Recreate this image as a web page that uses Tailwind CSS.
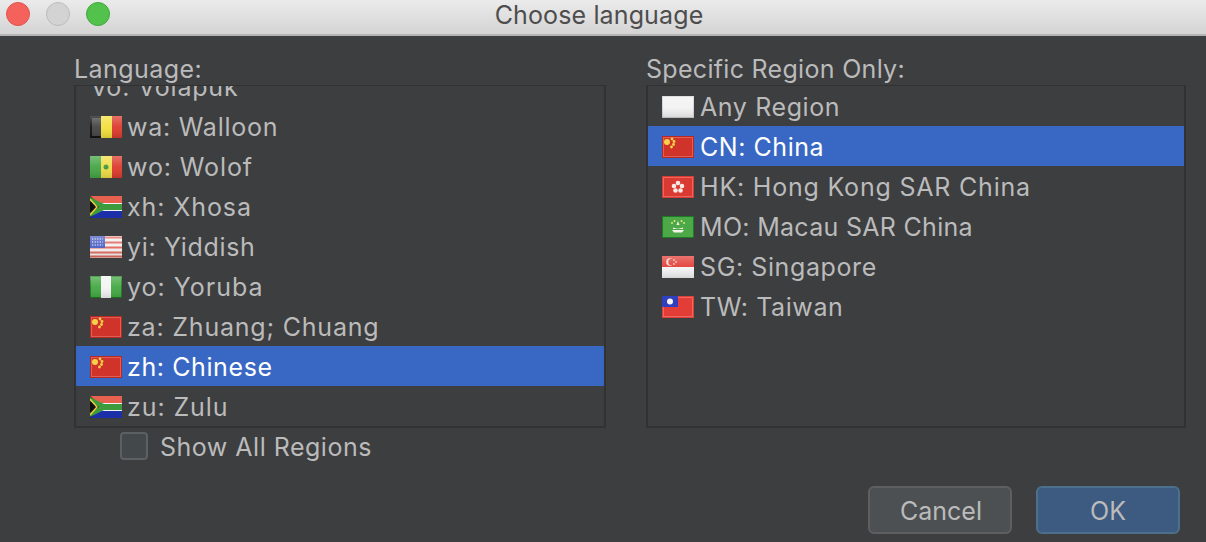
<!DOCTYPE html>
<html lang="en">
<head>
<meta charset="UTF-8">
<title>Choose language</title>
<script src="https://cdn.jsdelivr.net/npm/@tailwindcss/browser@4"></script>
</head>
<body class="bg-[#3d3e40] overflow-hidden">
<!-- shared flags -->
<svg width="0" height="0" class="absolute">
  <defs>
    <linearGradient id="gloss" x1="0" y1="0" x2="0" y2="1">
      <stop offset="0" stop-color="#fff" stop-opacity=".28"/>
      <stop offset=".5" stop-color="#fff" stop-opacity=".05"/>
      <stop offset="1" stop-color="#000" stop-opacity=".12"/>
    </linearGradient>
    <symbol id="cn" viewBox="0 0 32 22">
      <rect width="32" height="22" fill="#b92820"/>
      <rect x="1.500" y="1.500" width="29" height="19" fill="#d0332a" stroke="#dc6057" stroke-width="1"/>
      <circle cx="5" cy="6" r="3" fill="#f5d24a"/>
      <circle cx="10" cy="3" r="1.400" fill="#f5d24a"/>
      <circle cx="12" cy="5.500" r="1.400" fill="#f5d24a"/>
      <circle cx="11.500" cy="8.500" r="1.400" fill="#f5d24a"/>
      <circle cx="9.500" cy="11" r="1.400" fill="#f5d24a"/>
    </symbol>
    <symbol id="za" viewBox="0 0 32 22">
      <rect width="32" height="7" fill="#e8604e"/>
      <rect y="7" width="32" height="8" fill="#f2f2f2"/>
      <rect y="15" width="32" height="7" fill="#1c2fa8"/>
      <path d="M0 0 L13 11 L0 22 Z" fill="#111"/>
      <path d="M0 1 L14 8 H32 V14 H14 L0 21 V17 L9 11 L0 5 Z" fill="#3d9a3d"/>
      <path d="M0 3 L7 11 L0 19" fill="none" stroke="#e9c93f" stroke-width="1.600"/>
    </symbol>
  </defs>
</svg>

<div class="w-[1206px] h-[542px] flex flex-col font-['Inter',sans-serif]">
  <!-- title bar -->
  <div class="h-[36px] shrink-0 flex items-center relative bg-gradient-to-b from-[#ebebeb] to-[#d4d4d4] border-b-2 border-[#b4b4b4]">
    <div class="flex gap-[16px] pl-[6px] -mt-[6px]">
      <span class="w-[24px] h-[24px] rounded-full bg-[#f4625b] border border-[#e0554e]"></span>
      <span class="w-[24px] h-[24px] rounded-full bg-[#d3d3d3] border border-[#bcbcbc]"></span>
      <span class="w-[24px] h-[24px] rounded-full bg-[#53c24d] border border-[#3fa93a]"></span>
    </div>
    <div class="absolute left-0 top-0 w-[1198px] text-center text-[25px] leading-[30px] tracking-[0.13px] text-[#4d4d4d]">Choose language</div>
  </div>

  <div class="flex-1 flex flex-col text-[#bbbbbb] text-[25px]">
    <div class="flex gap-[40px] pl-[74px] pt-[18px]">
      <!-- language column -->
      <div class="w-[532px]">
        <div class="h-[31px] leading-[30px] tracking-[0.45px] relative z-10">Language:</div>
        <div class="h-[343px] border-2 border-t-1 border-[#323232] overflow-hidden">
          <div class="-mt-[20px]">
            <div class="h-[40px] flex items-center pl-[16px]"><span class="pt-[4px] tracking-[0.8px]">vo: Volapuk</span></div>
            <div class="h-[40px] flex items-center pl-[14px] gap-[5px]">
              <svg class="w-[32px] h-[22px] mt-[2px] blur-[0.5px]" viewBox="0 0 32 22"><rect width="11" height="22" fill="#111"/><rect x="2" y="2" width="9" height="18" fill="#444"/><rect x="11" width="11" height="22" fill="#f3e03c"/><rect x="22" width="10" height="22" fill="#dc3a2c"/><rect width="32" height="22" fill="url(#gloss)"/></svg>
              <span class="pt-[4px] tracking-[0.75px]">wa: Walloon</span>
            </div>
            <div class="h-[40px] flex items-center pl-[14px] gap-[5px]">
              <svg class="w-[32px] h-[22px] mt-[2px] blur-[0.5px]" viewBox="0 0 32 22"><rect width="11" height="22" fill="#44a544"/><rect x="11" width="11" height="22" fill="#f0dd46"/><rect x="22" width="10" height="22" fill="#dc3a2c"/><circle cx="16" cy="11" r="2.500" fill="#3d9a3d"/><rect width="32" height="22" fill="url(#gloss)"/></svg>
              <span class="pt-[4px] tracking-[0.9px]">wo: Wolof</span>
            </div>
            <div class="h-[40px] flex items-center pl-[14px] gap-[5px]">
              <svg class="w-[32px] h-[22px] mt-[2px] blur-[0.5px]"><use href="#za"/></svg>
              <span class="pt-[4px] tracking-[0.9px]">xh: Xhosa</span>
            </div>
            <div class="h-[40px] flex items-center pl-[14px] gap-[5px]">
              <svg class="w-[32px] h-[22px] mt-[2px] blur-[0.5px]" viewBox="0 0 32 22"><rect width="32" height="22" fill="#f4eeee"/><path d="M0 1.500H32M0 6.500H32M0 11.500H32M0 16.500H32M0 20.500H32" stroke="#e0685c" stroke-width="2"/><rect width="15" height="12" fill="#4a5fc4"/><path d="M2 3h11M2 6h11M2 9h11" stroke="#fff" stroke-width="1.200" stroke-dasharray="1.200 1.400"/><rect width="32" height="22" fill="url(#gloss)"/></svg>
              <span class="pt-[4px] tracking-[0.65px]">yi: Yiddish</span>
            </div>
            <div class="h-[40px] flex items-center pl-[14px] gap-[5px]">
              <svg class="w-[32px] h-[22px] mt-[2px] blur-[0.5px]" viewBox="0 0 32 22"><rect width="32" height="22" fill="#1e7a1e"/><rect x="1" y="1" width="10" height="20" fill="#43a843"/><rect x="21" y="1" width="10" height="20" fill="#43a843"/><rect x="11" width="10" height="22" fill="#f4f4f4"/><rect width="32" height="22" fill="url(#gloss)"/></svg>
              <span class="pt-[4px] tracking-[1px]">yo: Yoruba</span>
            </div>
            <div class="h-[40px] flex items-center pl-[14px] gap-[5px]">
              <svg class="w-[32px] h-[22px] mt-[2px] blur-[0.5px]"><use href="#cn"/></svg>
              <span class="pt-[4px] tracking-[0.8px]">za: Zhuang; Chuang</span>
            </div>
            <div class="h-[40px] flex items-center pl-[14px] gap-[5px] bg-[#3968c4] text-white">
              <svg class="w-[32px] h-[22px] mt-[2px] blur-[0.5px]"><use href="#cn"/></svg>
              <span class="pt-[4px] tracking-[0.6px]">zh: Chinese</span>
            </div>
            <div class="h-[40px] flex items-center pl-[14px] gap-[5px]">
              <svg class="w-[32px] h-[22px] mt-[2px] blur-[0.5px]"><use href="#za"/></svg>
              <span class="pt-[4px] tracking-[0.9px]">zu: Zulu</span>
            </div>
          </div>
        </div>
      </div>

      <!-- region column -->
      <div class="w-[540px]">
        <div class="h-[31px] leading-[30px] tracking-[0.3px]">Specific Region Only:</div>
        <div class="h-[343px] border-2 border-t-1 border-[#323232] overflow-hidden">
          <div class="h-[40px] flex items-center pl-[14px] gap-[6px]">
            <svg class="w-[32px] h-[22px] mt-[2px] blur-[0.5px]" viewBox="0 0 32 22"><rect width="32" height="22" fill="#d2d2d2"/><rect x="1" y="1" width="30" height="20" fill="#f2f2f2"/><rect width="32" height="22" fill="url(#gloss)"/></svg>
            <span class="pt-[4px] tracking-[0.6px]">Any Region</span>
          </div>
          <div class="h-[40px] flex items-center pl-[14px] gap-[6px] bg-[#3968c4] text-white">
            <svg class="w-[32px] h-[22px] mt-[2px] blur-[0.5px]"><use href="#cn"/></svg>
            <span class="pt-[4px] tracking-[0.55px]">CN: China</span>
          </div>
          <div class="h-[40px] flex items-center pl-[14px] gap-[6px]">
            <svg class="w-[32px] h-[22px] mt-[2px] blur-[0.5px]" viewBox="0 0 32 22"><rect width="32" height="22" fill="#d93a32"/><rect x="1.500" y="1.500" width="29" height="19" fill="none" stroke="#e8685f"/><g fill="#fbe9e6"><circle cx="16" cy="7" r="2.300"/><circle cx="20" cy="10" r="2.300"/><circle cx="18.500" cy="14.500" r="2.300"/><circle cx="13.500" cy="14.500" r="2.300"/><circle cx="12" cy="10" r="2.300"/></g></svg>
            <span class="pt-[4px] tracking-[0.8px]">HK: Hong Kong SAR China</span>
          </div>
          <div class="h-[40px] flex items-center pl-[14px] gap-[6px]">
            <svg class="w-[32px] h-[22px] mt-[2px] blur-[0.5px]" viewBox="0 0 32 22"><rect width="32" height="22" fill="#1f7a25"/><rect x="1" y="1" width="30" height="20" fill="#4da848"/><path d="M16 5l1.500 4h-3zM10 14h12l-2 2.500h-8z" fill="#f2f2e6"/><path d="M11 11.500c3 1.500 7 1.500 10 0v1.500h-10z" fill="#f2f2e6"/><g fill="#f0e98a"><circle cx="10" cy="7" r=".9"/><circle cx="12.500" cy="5" r=".9"/><circle cx="19.500" cy="5" r=".9"/><circle cx="22" cy="7" r=".9"/></g></svg>
            <span class="pt-[4px] tracking-[0.3px]">MO: Macau SAR China</span>
          </div>
          <div class="h-[40px] flex items-center pl-[14px] gap-[6px]">
            <svg class="w-[32px] h-[22px] mt-[2px] blur-[0.5px]" viewBox="0 0 32 22"><rect width="32" height="11" fill="#e23d36"/><rect y="11" width="32" height="11" fill="#f4f4f4"/><circle cx="8" cy="6" r="3.800" fill="#f8dcd8"/><circle cx="9.500" cy="6" r="3.200" fill="#e23d36"/><circle cx="12" cy="4" r=".8" fill="#fff"/><circle cx="14" cy="6" r=".8" fill="#fff"/><circle cx="12" cy="8" r=".8" fill="#fff"/><rect width="32" height="22" fill="url(#gloss)"/></svg>
            <span class="pt-[4px] tracking-[0.6px]">SG: Singapore</span>
          </div>
          <div class="h-[40px] flex items-center pl-[14px] gap-[6px]">
            <svg class="w-[32px] h-[22px] mt-[2px] blur-[0.5px]" viewBox="0 0 32 22"><rect width="32" height="22" fill="#e23d36"/><rect x="1.500" y="1.500" width="29" height="19" fill="none" stroke="#ea6a62"/><rect width="16" height="11" fill="#2f3fc0"/><circle cx="8" cy="5.500" r="3" fill="#f4f4f4"/></svg>
            <span class="pt-[4px] tracking-[0.6px]">TW: Taiwan</span>
          </div>
        </div>
      </div>
    </div>

    <!-- show all regions -->
    <div class="flex items-center gap-[12px] pl-[120px] mt-[4px] h-[28px]">
      <span class="w-[28px] h-[28px] rounded-[4px] bg-[#43494a] border-2 border-[#5c6062]"></span>
      <span class="pt-[3px] tracking-[0.5px]">Show All Regions</span>
    </div>

    <!-- buttons -->
    <div class="flex justify-end gap-[24px] pr-[26px] mt-[26px]">
      <button class="w-[144px] h-[48px] pt-[3px] pl-[2px] rounded-[6px] bg-[#4c5052] border-2 border-[#5e6060]">Cancel</button>
      <button class="w-[144px] h-[48px] pt-[3px] rounded-[6px] bg-[#3d5a80] border-2 border-[#4c708c]">OK</button>
    </div>
  </div>
</div>
</body>
</html>
